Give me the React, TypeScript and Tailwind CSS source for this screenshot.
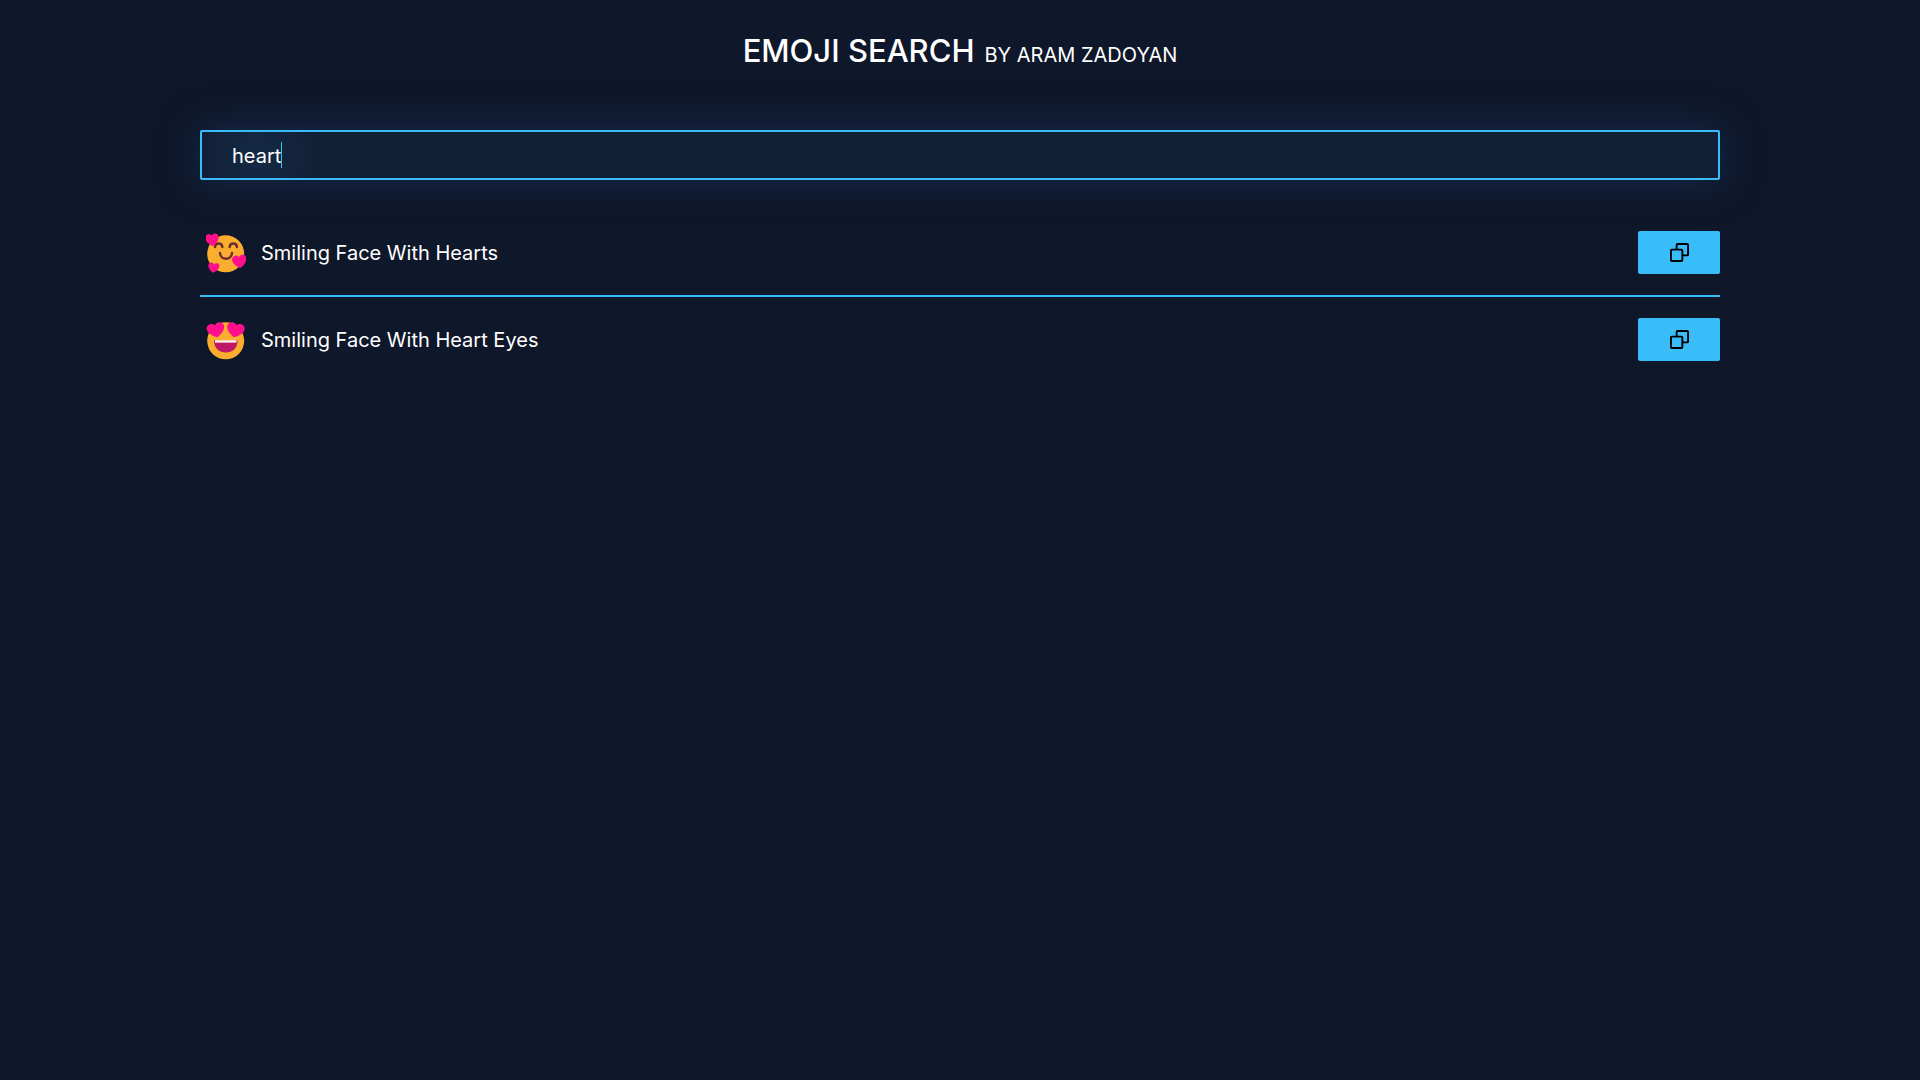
import { useState } from "react";

const HEART =
  "M0 4C-1 3.500-4.200 1.400-4.200-1.200-4.200-2.700-3.200-3.600-2.100-3.600-1.200-3.600-.4-3.200 0-2.400.4-3.200 1.200-3.600 2.100-3.600 3.200-3.600 4.200-2.700 4.200-1.200 4.200 1.400 1 3.500 0 4Z";

const SmilingFaceWithHearts = () => (
  <svg viewBox="0 0 40 40" className="h-10 w-10" aria-hidden="true">
    <circle cx="19.700" cy="20.8" r="18.5" fill="#fbad30" />
    <g fill="none" stroke="#6b2d2c" strokeWidth="2.4" strokeLinecap="round">
      <path d="M9 14c.6-4.600 6.800-4.600 7.400 0" />
      <path d="M23.600 14c.6-4.600 6.800-4.600 7.400 0" />
      <path d="M14 20c.5 7.600 11.500 7.600 12 0" />
    </g>
    <g fill="#ff0f8c">
      <path transform="translate(6.200 6.600) rotate(-8) scale(1.600)" d={HEART} />
      <path transform="translate(33.500 28.200) rotate(-8) scale(1.700)" d={HEART} />
      <path transform="translate(7.600 34.500) rotate(8) scale(1.300)" d={HEART} />
    </g>
  </svg>
);

const SmilingFaceWithHeartEyes = () => (
  <svg viewBox="0 0 40 40" className="h-10 w-10" aria-hidden="true">
    <circle cx="19.700" cy="20.8" r="18.5" fill="#fbad30" />
    <path d="M8 20.200h23.500c0 8-5 12.300-11.700 12.300S8 28.200 8 20.200Z" fill="#bd1768" />
    <path d="M9 20.200h21.500v2.400H9z" fill="#fff4e5" />
    <g fill="#ff0f8c">
      <path transform="translate(9.900 9.900) rotate(-12) scale(2.100 1.900)" d={HEART} />
      <path transform="translate(29.500 9.900) rotate(12) scale(2.100 1.900)" d={HEART} />
    </g>
  </svg>
);

const CopyIcon = () => (
  <svg
    viewBox="0 0 20 20"
    className="h-[19px] w-[19px]"
    fill="none"
    stroke="currentColor"
    strokeWidth="2"
    strokeLinejoin="round"
    aria-hidden="true"
  >
    <rect x="1" y="7" width="12" height="12" rx="0.800" />
    <path d="M7 7V2a1 1 0 0 1 1-1h10a1 1 0 0 1 1 1v10a1 1 0 0 1-1 1h-5" />
  </svg>
);

const emojis = [
  { title: "Smiling Face With Hearts", symbol: "🥰", Icon: SmilingFaceWithHearts },
  { title: "Smiling Face With Heart Eyes", symbol: "😍", Icon: SmilingFaceWithHeartEyes },
];

export default function App() {
  const [query, setQuery] = useState("heart");

  const results = emojis.filter((emoji) =>
    emoji.title.toLowerCase().includes(query.trim().toLowerCase())
  );

  return (
    <div className="min-h-screen bg-[#0f172a] px-6 font-['Inter',sans-serif] text-white lg:px-[200px]">
      <header className="flex flex-wrap items-baseline justify-center gap-2.5 pt-[33px]">
        <h1 className="text-[31px] leading-9 font-medium">EMOJI SEARCH</h1>
        <p className="text-xl">BY ARAM ZADOYAN</p>
      </header>

      <main className="pt-[61px]">
        {/* Search */}
        <div className="relative">
          <input
            type="text"
            aria-label="Search emoji"
            value={query}
            onChange={(e) => setQuery(e.target.value)}
            className="block h-[50px] w-full rounded-xs border-2 border-[#38bdf8] bg-[#122036] bg-[radial-gradient(circle_at_56px_50%,#142a45,transparent_60px)] px-[30px] pt-0.5 text-xl caret-transparent shadow-[0_0_40px_#1a365da6] outline-none"
          />
          {/* Text caret */}
          <span className="pointer-events-none absolute inset-y-3 left-[81px] w-px bg-[#38bdf8]" />
        </div>

        {/* Results */}
        <ul className="divide-y-2 divide-[#38bdf8] pt-[30px]">
          {results.map(({ title, symbol, Icon }) => (
            <li key={title} className="flex items-center gap-[15px] py-[21px] pl-1.5">
              <Icon />
              <span className="grow text-xl">{title}</span>
              <button
                type="button"
                aria-label={`Copy ${title}`}
                onClick={() => navigator.clipboard?.writeText(symbol)}
                className="flex h-[43px] w-[82px] items-center justify-center rounded-xs bg-[#38bdf8] text-black hover:bg-[#7dd3fc]"
              >
                <CopyIcon />
              </button>
            </li>
          ))}
        </ul>
      </main>
    </div>
  );
}
